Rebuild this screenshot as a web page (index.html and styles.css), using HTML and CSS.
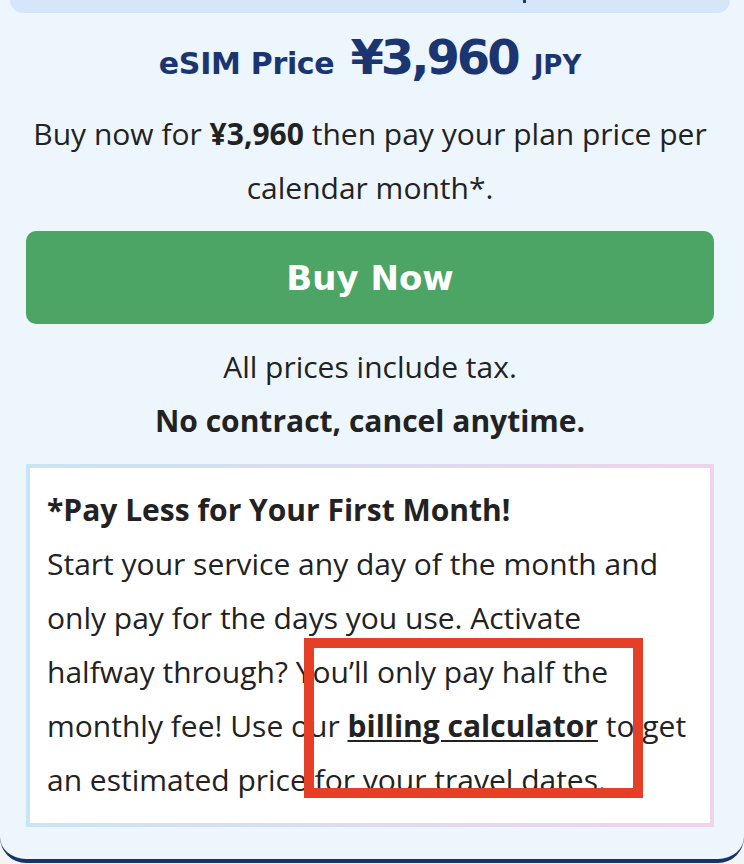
FILE: index.html
```html
<!DOCTYPE html>
<html lang="en">
<head>
<meta charset="utf-8">
<title>eSIM Price</title>
<link rel="stylesheet" href="styles.css">
</head>
<body>
<div class="card">
  <div class="topbar"><span class="descender"></span></div>
  <div class="content">
    <h2 class="price"><span class="label">eSIM Price</span> <span class="amount">¥3,960</span> <span class="cur">JPY</span></h2>
    <p class="lead">Buy now for <b>¥3,960</b> then pay your plan price per calendar month*.</p>
    <a class="buy" href="#">Buy Now</a>
    <p class="note">All prices include tax.</p>
    <p class="note strong">No contract, cancel anytime.</p>
    <div class="promo">
      <p class="promo-text"><b>*Pay Less for Your First Month!</b><br>Start your service any day of the month and only pay for the days you use. Activate halfway through? You’ll only pay half the monthly fee! Use our <a class="calc" href="#">billing calculator</a> to get an estimated price for your travel dates.</p>
      <div class="highlight"></div>
    </div>
  </div>
</div>
</body>
</html>
```

FILE: styles.css
```css
html, body {
  margin: 0;
  padding: 0;
  background: #f4f4f4;
}

.card {
  width: 744px;
  box-sizing: border-box;
  background: #eef6fd;
  border-bottom: 4px solid #17336c;
  border-radius: 0 0 26px 26px;
  padding-bottom: 32px;
  font-family: "Open Sans", "Liberation Sans", sans-serif;
  color: #222222;
}

.topbar {
  position: relative;
  height: 13px;
  margin: 0 14px 0 10px;
  background: #d5e6fb;
  border-radius: 0 0 14px 14px;
}

.descender {
  position: absolute;
  left: 513px;
  top: 0;
  width: 3px;
  height: 3px;
  background: #1d3a78;
}

.content {
  padding: 0 30px 0 26px;
}

.price {
  margin: 20px 0 0;
  text-align: center;
  font-family: "DejaVu Sans", sans-serif;
  font-weight: 700;
  font-size: 46px;
  line-height: 50px;
  color: #1a3570;
  white-space: nowrap;
}

.price span {
  line-height: 1;
}

.price .label {
  font-size: 30px;
  letter-spacing: -0.3px;
}

.price .amount {
  font-size: 48px;
  letter-spacing: -3px;
}

.price .cur {
  font-size: 26px;
  letter-spacing: 0;
}

.lead {
  margin: 24px 0 0;
  text-align: center;
  font-size: 30px;
  line-height: 54px;
}

.lead b {
  font-weight: 700;
}

.buy {
  display: flex;
  align-items: center;
  justify-content: center;
  height: 93px;
  margin-top: 16px;
  background: #4ca564;
  border-radius: 10px;
  color: #ffffff;
  text-decoration: none;
  font-family: "DejaVu Sans", sans-serif;
  font-weight: 700;
  font-size: 34px;
}

.note {
  margin: 0;
  text-align: center;
  font-size: 30px;
  line-height: 54px;
}

.buy + .note {
  margin-top: 16px;
}

.note.strong {
  font-weight: 700;
}

.promo {
  position: relative;
  margin-top: 16px;
  background: #ffffff;
  border: 4px solid;
  border-image: linear-gradient(90deg, #c9e5f3, #f0d3ea) 1;
  padding: 15px 17px 16px 17px;
}

.promo-text {
  margin: 0;
  font-size: 30px;
  line-height: 54px;
}

.calc {
  color: #222222;
  font-weight: 700;
  text-decoration: underline;
  text-decoration-thickness: 2px;
  text-underline-offset: 3px;
}

.highlight {
  position: absolute;
  left: 274px;
  top: 170px;
  width: 339px;
  height: 160px;
  box-sizing: border-box;
  border: 10px solid #e63f27;
}
```
